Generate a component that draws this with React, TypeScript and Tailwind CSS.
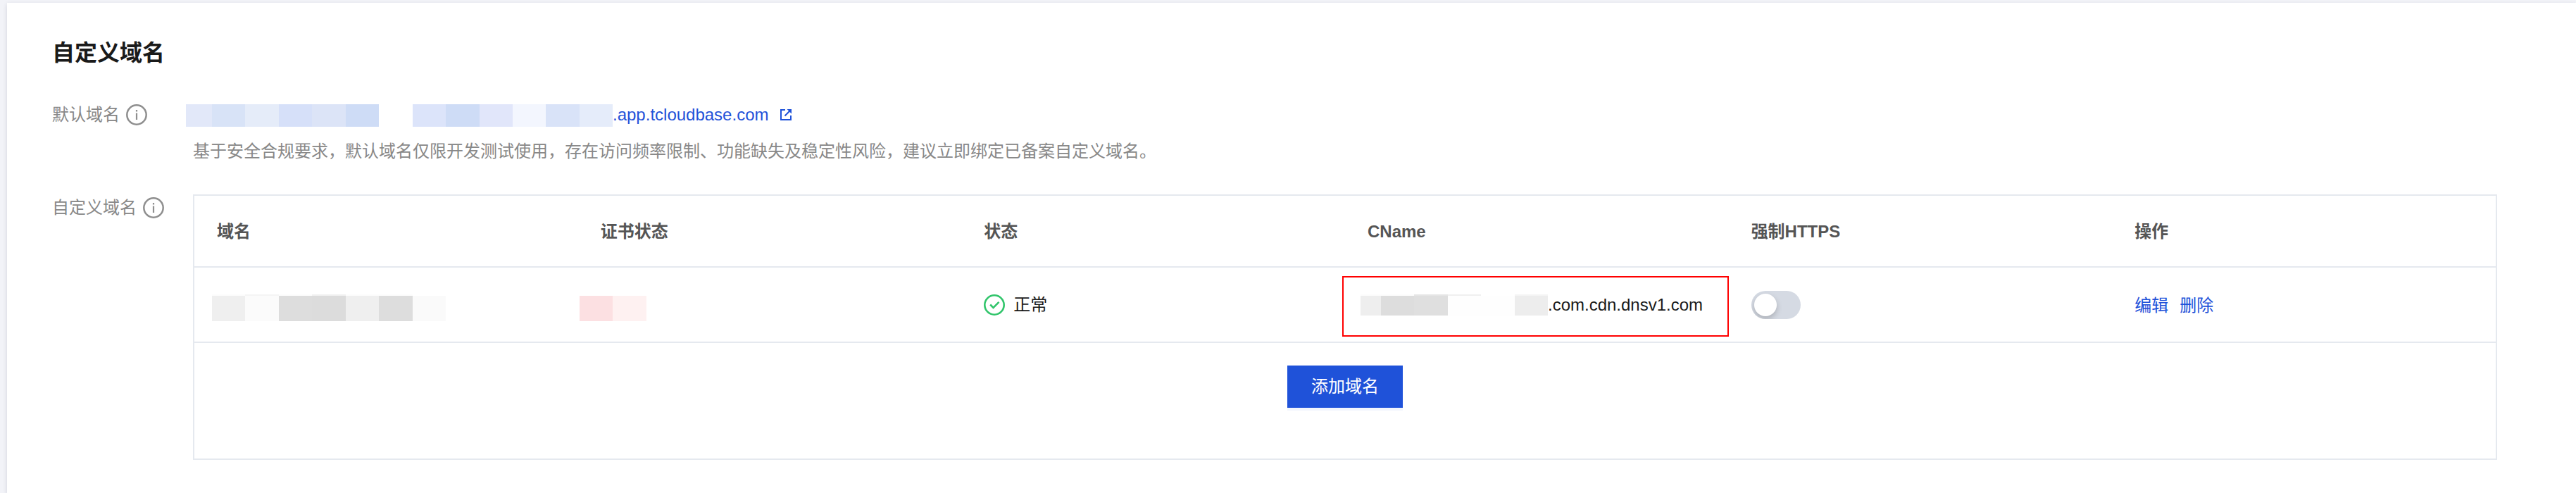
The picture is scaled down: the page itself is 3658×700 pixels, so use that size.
import { useState } from "react"
import { clsx } from "clsx"

type Block = { width: string; color: string; cap?: string }

const defaultDomainBlocks: Block[] = [
  { width: "w-[37px]", color: "bg-[#e2e8f9]" },
  { width: "w-[47px]", color: "bg-[#d8e3f7]" },
  { width: "w-[48px]", color: "bg-[#e5ecf9]" },
  { width: "w-[47px]", color: "bg-[#d6e0f9]" },
  { width: "w-[48px]", color: "bg-[#dce4f7]" },
  { width: "w-[47px]", color: "bg-[#cedcf6]" },
  { width: "w-[48px]", color: "bg-white" },
  { width: "w-[47px]", color: "bg-[#dce4fa]" },
  { width: "w-[48px]", color: "bg-[#cedcf6]" },
  { width: "w-[47px]", color: "bg-[#e1e6fa]" },
  { width: "w-[47px]", color: "bg-[#f3f6fe]" },
  { width: "w-[48px]", color: "bg-[#d9e3f8]" },
  { width: "w-[47px]", color: "bg-[#e5ecfa]" },
]

const domainBlocks: Block[] = [
  { width: "w-[47px]", color: "bg-[#efefef]", cap: "bg-[#fcfcfc]" },
  { width: "w-[48px]", color: "bg-[#fbfbfb]", cap: "bg-[#f5f5f5]" },
  { width: "w-[47px]", color: "bg-[#dddddd]", cap: "bg-[#fcfcfc]" },
  { width: "w-[48px]", color: "bg-[#dcdcdc]", cap: "bg-[#f0f0f0]" },
  { width: "w-[47px]", color: "bg-[#efefef]", cap: "bg-[#fcfcfc]" },
  { width: "w-[48px]", color: "bg-[#dddddd]", cap: "bg-[#fcfcfc]" },
  { width: "w-[47px]", color: "bg-[#fafafa]", cap: "bg-white" },
]

const certBlocks: Block[] = [
  { width: "w-[47px]", color: "bg-[#fce0e2]", cap: "bg-white" },
  { width: "w-[48px]", color: "bg-[#fef1f1]", cap: "bg-white" },
]

const cnameBlocks: Block[] = [
  { width: "w-[29px]", color: "bg-[#eeeeee]", cap: "bg-[#fcfcfc]" },
  { width: "w-[47px]", color: "bg-[#dddddd]", cap: "bg-[#fcfcfc]" },
  { width: "w-[48px]", color: "bg-[#dfdfdf]", cap: "bg-[#e5e5e5]" },
  { width: "w-[47px]", color: "bg-[#fefefe]", cap: "bg-[#f0f0f0]" },
  { width: "w-[48px]", color: "bg-[#fefefe]", cap: "bg-white" },
  { width: "w-[47px]", color: "bg-[#ededed]", cap: "bg-[#f5f5f5]" },
]

const columns = ["域名", "证书状态", "状态", "CName", "强制HTTPS", "操作"]

function Mosaic({ blocks, height }: { blocks: Block[]; height: string }) {
  return (
    <span aria-hidden="true" className="flex shrink-0">
      {blocks.map((block, index) => (
        <span key={index} className={clsx("flex flex-col", block.width)}>
          {block.cap && <span className={clsx("h-0.5", block.cap)} />}
          <span className={clsx(height, block.color)} />
        </span>
      ))}
    </span>
  )
}

function InfoIcon() {
  return (
    <svg viewBox="0 0 30 30" fill="none" className="size-[30px] shrink-0 text-[#8f8f8f]">
      <circle cx="15" cy="15" r="13.7" stroke="currentColor" strokeWidth="2.5" />
      <rect x="13.9" y="12.5" width="2.2" height="9.5" fill="currentColor" />
      <rect x="13.9" y="8" width="2.2" height="2.5" fill="currentColor" />
    </svg>
  )
}

function ExternalIcon() {
  return (
    <svg viewBox="0 0 18 18" fill="none" stroke="currentColor" strokeWidth="2" className="size-[18px]">
      <path d="M8 2H2v14h14v-6" />
      <path d="M7.5 10.5 15 3" />
      <path d="M10.5 1H17v6.5z" fill="currentColor" stroke="none" />
    </svg>
  )
}

function SuccessIcon() {
  return (
    <svg viewBox="0 0 30 30" fill="none" stroke="currentColor" className="size-[30px] text-[#31c56b]">
      <circle cx="15" cy="15" r="13.7" strokeWidth="2.6" />
      <path d="m9.2 14.5 4.3 4.3 8-8" strokeWidth="2.6" />
    </svg>
  )
}

function FieldLabel({ children }: { children: string }) {
  return (
    <div className="flex h-[30px] w-[200px] shrink-0 items-center gap-[9px] text-[#888888]">
      {children}
      <InfoIcon />
    </div>
  )
}

export default function App() {
  const [forceHttps, setForceHttps] = useState(false)

  return (
    <div className="min-h-screen bg-[#f2f3f8] pt-1 pl-2.5 font-['Liberation_Sans','Noto_Sans_CJK_SC',sans-serif] text-2xl leading-[30px] text-[#1a1a1a]">
      <main className="min-h-[696px] bg-white pt-[50px] pr-28 pb-12 pl-16 shadow-[0_2px_6px_rgba(54,58,80,0.16)]">
        <h2 className="text-[32px] leading-[42px] font-bold">自定义域名</h2>

        <section className="mt-[52px] flex">
          <FieldLabel>默认域名</FieldLabel>
          <div>
            <div className="-ml-2.5 flex h-8 items-start">
              <Mosaic blocks={defaultDomainBlocks} height="h-8" />
              <a href="#" className="flex items-center gap-4 text-[#1f52d9]">
                .app.tcloudbase.com
                <ExternalIcon />
              </a>
            </div>
            <p className="mt-5 text-[#888888]">
              基于安全合规要求，默认域名仅限开发测试使用，存在访问频率限制、功能缺失及稳定性风险，建议立即绑定已备案自定义域名。
            </p>
          </div>
        </section>

        <section className="mt-[46px] flex">
          <div className="pt-1">
            <FieldLabel>自定义域名</FieldLabel>
          </div>
          <div className="min-w-0 flex-1 border-2 border-[#e5e9ef]">
            <table className="w-full table-fixed border-separate border-spacing-0 text-left">
              <thead>
                <tr>
                  {columns.map((column) => (
                    <th
                      key={column}
                      scope="col"
                      className="h-[102px] border-b-2 border-[#e5e9ef] px-8 pt-0.5 font-bold text-[#555555]"
                    >
                      {column}
                    </th>
                  ))}
                </tr>
              </thead>
              <tbody className="[&_td]:h-[107px] [&_td]:border-b-2 [&_td]:border-[#e5e9ef]">
                <tr>
                  <td className="pt-2 pl-[25px]">
                    <Mosaic blocks={domainBlocks} height="h-9" />
                  </td>
                  <td className="pt-2 pl-0.5">
                    <Mosaic blocks={certBlocks} height="h-9" />
                  </td>
                  <td className="px-8">
                    <div className="flex items-center gap-3">
                      <SuccessIcon />
                      正常
                    </div>
                  </td>
                  <td className="relative pl-[22px]">
                    <div className="flex items-center">
                      <Mosaic blocks={cnameBlocks} height="h-7" />
                      .com.cdn.dnsv1.com
                    </div>
                    <div className="pointer-events-none absolute top-3 right-0 -left-1 h-[86px] border-2 border-[#ff0000]" />
                  </td>
                  <td className="px-8">
                    <input
                      type="checkbox"
                      role="switch"
                      aria-label="强制HTTPS"
                      checked={forceHttps}
                      onChange={(e) => setForceHttps(e.target.checked)}
                      className="block h-10 w-[70px] cursor-pointer appearance-none overflow-hidden rounded-full bg-[#d5dae3] p-1 before:block before:size-8 before:rounded-full before:bg-white before:shadow-[0_4px_8px_rgba(0,0,0,0.2)] checked:bg-[#1f52d9] checked:before:ml-[30px]"
                    />
                  </td>
                  <td className="px-8 pt-0.5">
                    <div className="flex gap-4 text-[#1f52d9]">
                      <button type="button">编辑</button>
                      <button type="button">删除</button>
                    </div>
                  </td>
                </tr>
              </tbody>
            </table>
            <div className="flex justify-center pt-8 pb-[72px]">
              <button
                type="button"
                className="h-[60px] bg-[#1f52d9] px-[34px] text-white shadow-[0_4px_0_#f2f6fd]"
              >
                添加域名
              </button>
            </div>
          </div>
        </section>
      </main>
    </div>
  )
}
